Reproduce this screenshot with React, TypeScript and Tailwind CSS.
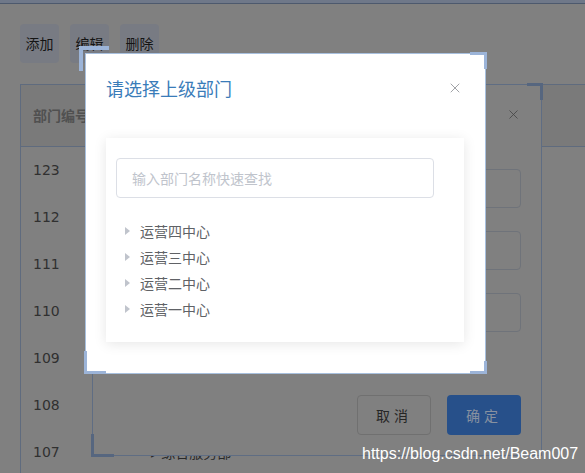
import { X } from "lucide-react";

const rows = ["123", "112", "111", "110", "109", "108", "107"];
const depts = ["运营四中心", "运营三中心", "运营二中心", "运营一中心"];

// selection marks the screenshot tool left on the dialog corners
function Corner({ className }: { className: string }) {
  return <span aria-hidden="true" className={`absolute ${className}`} />;
}

function ToolButton({ label }: { label: string }) {
  return (
    <button
      className="flex h-[39px] w-[39px] items-center justify-center rounded-[4px] bg-[#787b83] text-[14px] text-[#151515]"
      type="button"
    >
      {label}
    </button>
  );
}

export default function App() {
  return (
    <div className="relative h-[473px] w-[585px] overflow-hidden bg-[#808080] font-['Noto_Sans_CJK_SC',sans-serif]">
      {/* page behind the mask */}
      <div className="h-[4px] border-b border-[#4d596d] bg-[#6f7889]" />
      <div className="flex gap-[11px] pl-[20px] pt-[20px]">
        <ToolButton label="添加" />
        <ToolButton label="编辑" />
        <ToolButton label="删除" />
      </div>

      <div className="ml-[20px] mt-[21px] border-l border-t border-[#5f6b7e]">
        <div className="flex h-[62px] items-center border-b border-[#5f6b7e] bg-[#7a7a7a] pl-[12px] text-[14px] font-bold text-[#505050]">
          部门编号
        </div>
        {rows.map((n, i) => (
          <div className="flex h-[47px] items-center pl-[12px]" key={n}>
            <span className="w-[118px] font-['DejaVu_Sans',sans-serif] text-[14px] text-[#303030]">
              {n}
            </span>
            {i === rows.length - 1 ? (
              <span className="text-[14px] text-[#2a2a2a]">▸ 综合服务部</span>
            ) : null}
          </div>
        ))}
      </div>

      {/* second dialog (under the mask) */}
      <div className="absolute left-[92px] top-[84px] flex h-[372px] w-[450px] flex-col border border-[#5f6d83] bg-[#808080]">
        <div className="flex justify-end pr-[20px] pt-[22px]">
          <X className="h-[15px] w-[15px] text-[#454545]" strokeWidth={1.3} />
        </div>
        <div className="mt-[47px] flex flex-col items-end gap-[23px] pr-[20px]">
          {[0, 1, 2].map((i) => (
            <div
              className="h-[39px] w-[300px] rounded-[4px] border border-[#6f737a]"
              key={i}
            />
          ))}
        </div>
        <div className="mt-[63px] flex justify-end gap-[16px] pr-[20px]">
          <button
            className="h-[40px] w-[74px] rounded-[4px] border border-[#707070] text-[14px] tracking-[4px] text-[#262626]"
            type="button"
          >
            取消
          </button>
          <button
            className="h-[40px] w-[74px] rounded-[4px] bg-[#27508a] text-[14px] tracking-[4px] text-[#8791a0]"
            type="button"
          >
            确定
          </button>
        </div>
        <Corner className="-right-[2px] -top-[2px] h-[17px] w-[16px] border-r-[3px] border-t-[3px] border-[#56667f]" />
        <Corner className="-bottom-[2px] -left-[2px] h-[23px] w-[23px] border-b-[3px] border-l-[3px] border-[#56667f]" />
      </div>

      {/* front dialog */}
      <div className="absolute left-[85px] top-[53px] h-[321px] w-[401px] border border-[#a8c0de] bg-white">
        <div className="flex items-center justify-between pl-[20px] pr-[22px] pt-[22px]">
          <h2 className="text-[18px] leading-[24px] text-[#3a7cb9]">请选择上级部门</h2>
          <X className="h-[16px] w-[16px] text-[#9a9ca0]" strokeWidth={1.4} />
        </div>
        <div className="ml-[20px] mt-[38px] h-[204px] w-[358px] bg-white px-[10px] pt-[20px] shadow-[0_2px_12px_rgba(0,0,0,0.1)]">
          <div className="flex h-[40px] w-[318px] items-center rounded-[4px] border border-[#dcdfe6] pl-[15px] text-[14px] text-[#c0c4cc]">
            输入部门名称快速查找
          </div>
          <ul className="mt-[20px]">
            {depts.map((d) => (
              <li className="flex h-[26px] items-center text-[14px] text-[#606266]" key={d}>
                <svg
                  aria-hidden="true"
                  className="ml-[9px] mr-[10px]"
                  height="8"
                  viewBox="0 0 5 8"
                  width="5"
                >
                  <path d="M0 0 L5 4 L0 8 Z" fill="#c0c4cc" />
                </svg>
                {d}
              </li>
            ))}
          </ul>
        </div>
        <Corner className="-left-[7px] -top-[8px] h-[25px] w-[30px] border-l-4 border-t-4 border-[#9cb4d8]" />
        <Corner className="-right-[2px] -top-[2px] h-[17px] w-[17px] border-r-[3px] border-t-[3px] border-[#9cb4d8]" />
        <Corner className="-bottom-[1px] -left-[2px] h-[23px] w-[22px] border-b-[3px] border-l-[3px] border-[#9cb4d8]" />
        <Corner className="-bottom-[1px] -right-[2px] h-[13px] w-[17px] border-b-[3px] border-r-[3px] border-[#9cb4d8]" />
      </div>

      <span className="absolute left-[362px] top-[442px] font-['Liberation_Sans',sans-serif] text-[16px] text-white">
        https://blog.csdn.net/Beam007
      </span>
    </div>
  );
}
